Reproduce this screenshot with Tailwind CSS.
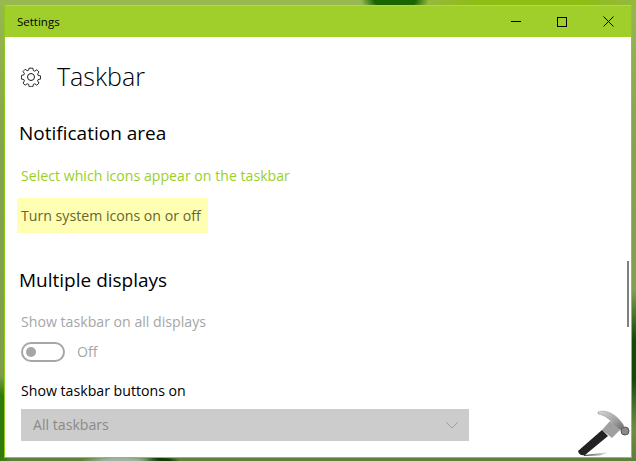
<!doctype html>
<html lang="en">
    <head>
        <meta charset="UTF-8" />
        <title>Settings</title>
        <script src="https://cdn.jsdelivr.net/npm/@tailwindcss/browser@4"></script>
    </head>

    <body>
        <!-- desktop wallpaper, blurred greens -->
        <div class="relative h-[461px] w-[636px] overflow-hidden pt-[5px] pl-[4px] font-['Open_Sans',sans-serif] bg-[radial-gradient(ellipse_34px_16px_at_395px_0px,#1c6400_60%,transparent_100%),radial-gradient(ellipse_10px_70px_at_634px_360px,#0f4a0a_30%,transparent_100%),radial-gradient(ellipse_14px_50px_at_0px_425px,#2f7a08_60%,transparent_100%),radial-gradient(ellipse_40px_6px_at_120px_461px,#9db5a0_40%,transparent_100%),radial-gradient(ellipse_20px_5px_at_160px_461px,#0f3d05_50%,transparent_100%),radial-gradient(ellipse_130px_20px_at_530px_0px,#8fbd12_40%,transparent_100%),linear-gradient(180deg,#98b850_0px,#86a34e_30%,#7f9c4e_85%,#5d7f3a_100%)]">
            <!-- settings window -->
            <div class="flex h-[453px] w-[628px] flex-col border-x border-b border-[#8ecb18] bg-white">
                <div class="flex h-[32px] shrink-0 items-center border-t border-[#b2d94a] bg-[#a0cf2b]">
                    <span class="pl-[12px] text-[11.5px] text-black">Settings</span>
                    <div class="ml-auto flex items-center">
                        <div class="flex h-[30px] w-[46px] items-center justify-center">
                            <div class="h-px w-[10px] bg-black"></div>
                        </div>
                        <div class="flex h-[30px] w-[46px] items-center justify-center">
                            <div class="h-[10px] w-[10px] border border-black"></div>
                        </div>
                        <div class="flex h-[30px] w-[46px] items-center justify-center">
                            <svg width="11" height="11" viewBox="0 0 11 11">
                                <path d="M0.5 0.5 10.5 10.5M10.5 0.5 0.5 10.5" stroke="#000" stroke-width="1" fill="none" />
                            </svg>
                        </div>
                    </div>
                </div>

                <div class="relative flex-1 pl-[15px]">
                    <div class="mt-[22px] ml-px flex h-[36px] items-center">
                        <svg width="20" height="20" viewBox="0 0 20 20" class="shrink-0">
                            <path
                                d="M8 .6h4l.5 2.600 1.500.6 2.200-1.500 2.300 2.300-1.500 2.200.6 1.500 2.600.5v3.400l-2.600.5-.6 1.500 1.500 2.200-2.300 2.300-2.200-1.500-1.500.6-.5 2.600H8l-.5-2.600-1.500-.6-2.200 1.500-2.300-2.300 1.500-2.200-.6-1.500-2.600-.5V8.300l2.600-.5.6-1.500-1.500-2.200 2.300-2.300 2.200 1.500 1.500-.6z"
                                transform="translate(.6 .6) scale(.94)"
                                fill="none"
                                stroke="#1a1a1a"
                                stroke-width="1"
                                stroke-linejoin="round"
                            />
                            <circle cx="10" cy="10" r="3.500" fill="none" stroke="#1a1a1a" stroke-width="1" />
                        </svg>
                        <h1 class="ml-[16px] text-[25px] font-light text-black">Taskbar</h1>
                    </div>

                    <h2 class="mt-[26px] -ml-px text-[19px] leading-[24px] text-black">Notification area</h2>
                    <p class="mt-[21px] pl-[1px] text-[14.15px] leading-[20px] text-[#9ccf2a]">Select which icons appear on the taskbar</p>
                    <p class="mt-[12px] -ml-[3px] flex h-[35px] w-[191px] items-center bg-[#ffffb4] pl-[4px] text-[14.15px] text-[#66662c]">Turn system icons on or off</p>

                    <h2 class="mt-[35px] -ml-px text-[19px] leading-[24px] text-black">Multiple displays</h2>
                    <p class="mt-[20px] pl-[1px] text-[14.15px] leading-[20px] text-[#a6a6a6]">Show taskbar on all displays</p>
                    <div class="mt-[9px] ml-[1px] flex items-center">
                        <div class="flex h-[20px] w-[44px] items-center rounded-full border-2 border-[#a6a6a6] pl-[3px]">
                            <div class="h-[10px] w-[10px] rounded-full bg-[#a6a6a6]"></div>
                        </div>
                        <span class="ml-[12px] text-[14.15px] text-[#a6a6a6]">Off</span>
                    </div>
                    <p class="mt-[19px] pl-[1px] text-[14.15px] leading-[20px] text-black">Show taskbar buttons on</p>
                    <div class="mt-[8px] ml-[1px] flex h-[32px] w-[448px] items-center justify-between bg-[#cccccc] pr-[10px] pl-[12px] text-[14.15px] text-[#8a8a8a]">
                        <span class="-mt-px">All taskbars</span>
                        <svg width="14" height="8" viewBox="0 0 14 8">
                            <path d="M1 1 7 7 13 1" fill="none" stroke="#a0a0a0" stroke-width="1" />
                        </svg>
                    </div>

                    <!-- scrollbar thumb -->
                    <div class="absolute top-[224px] right-[2px] h-[66px] w-[2px] bg-[#808080]"></div>

                    <!-- hammer watermark -->
                    <svg width="54" height="48" viewBox="0 0 54 48" class="absolute right-[1px] bottom-[1px]">
                        <defs>
                            <linearGradient id="head" x1="0" y1="0" x2="1" y2="1">
                                <stop offset="0" stop-color="#d8d8d8" />
                                <stop offset=".55" stop-color="#a4a4a4" />
                                <stop offset="1" stop-color="#6a6a6a" />
                            </linearGradient>
                            <linearGradient id="shadow" x1="0" y1="0" x2="1" y2="0">
                                <stop offset="0" stop-color="#444" />
                                <stop offset="1" stop-color="#fff" />
                            </linearGradient>
                        </defs>
                        <path d="M8 47 34 44 24 47.500 8 48z" fill="url(#shadow)" />
                        <path d="M22 4C30 1 41 6 48 18L44 22 38 17C35 12 29 7 22 6z" fill="url(#head)" stroke="#777" stroke-width=".4" />
                        <path d="M34 13 44 22 36 30 26 22z" fill="#a0a0a0" />
                        <circle cx="49" cy="23" r="4" fill="#8a8a8a" stroke="#555" stroke-width="1" />
                        <path d="M26 22 32 28 9 47C6 48 3 47 2 43z" fill="#222" />
                    </svg>
                </div>
            </div>
        </div>
    </body>
</html>
